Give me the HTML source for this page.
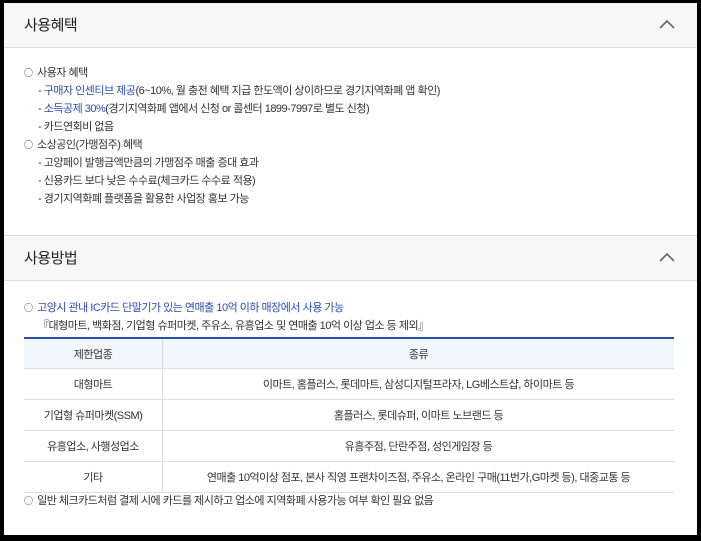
<!DOCTYPE html><html><head><meta charset="utf-8"><style>
body{margin:0;background:#000;width:701px;height:541px;overflow:hidden;font-family:"Liberation Sans","Noto Sans CJK KR",sans-serif;}
.p{position:absolute;left:4px;top:3px;width:693px;height:532px;background:#fff;}
.h{position:absolute;left:0;width:693px;height:44px;background:#f7f7f7;border-bottom:1px solid #ddd;}
.h span{position:absolute;left:20px;top:11px;font-size:15px;color:#222;letter-spacing:-0.5px;}
.h svg{position:absolute;left:655px;top:16px;}
.t{position:absolute;font-size:11px;color:#333;white-space:nowrap;line-height:14px;letter-spacing:-0.5px;}
.c{font-family:"Noto Sans CJK KR",sans-serif;font-size:9px;margin-right:2px;}
.b{color:#2a4ea8}
table{position:absolute;left:20px;top:334px;width:650px;border-collapse:collapse;font-size:11px;color:#333;letter-spacing:-0.5px;table-layout:fixed;}
th{background:#f1f6fb;font-weight:normal;height:29px;padding:0;border-top:2px solid #2a4ea8;border-bottom:1px solid #ddd;}
td{height:30px;padding:0;border-bottom:1px solid #ddd;text-align:center;white-space:nowrap;}
td:first-child,th:first-child{border-right:1px solid #ddd;width:138px;}
</style></head><body><div class="p">
<div class="h" style="top:0"><span>사용혜택</span><svg width="16" height="10"><path d="M1 9L8 2L15 9" fill="none" stroke="#666" stroke-width="1.6"/></svg></div>
<div class="t" style="left:20px;top:63px"><span class="c">○</span> 사용자 혜택</div>
<div class="t" style="left:34px;top:81px">- <span class="b">구매자 인센티브 제공</span>(6~10%, 월 충전 혜택 지급 한도액이 상이하므로 경기지역화폐 앱 확인)</div>
<div class="t" style="left:34px;top:99px">- <span class="b">소득공제 30%</span>(경기지역화폐 앱에서 신청 or 콜센터 1899-7997로 별도 신청)</div>
<div class="t" style="left:34px;top:117px">- 카드연회비 없음</div>
<div class="t" style="left:20px;top:135px"><span class="c">○</span> 소상공인(가맹점주) 혜택</div>
<div class="t" style="left:34px;top:153px">- 고양페이 발행금액만큼의 가맹점주 매출 증대 효과</div>
<div class="t" style="left:34px;top:171px">- 신용카드 보다 낮은 수수료(체크카드 수수료 적용)</div>
<div class="t" style="left:34px;top:189px">- 경기지역화폐 플랫폼을 활용한 사업장 홍보 가능</div>
<div class="h" style="top:232px;border-top:1px solid #ddd"><span>사용방법</span><svg width="16" height="10"><path d="M1 9L8 2L15 9" fill="none" stroke="#666" stroke-width="1.6"/></svg></div>
<div class="t" style="left:20px;top:298px"><span class="c">○</span> <span class="b">고양시 관내 IC카드 단말기가 있는 연매출 10억 이하 매장에서 사용 가능</span></div>
<div class="t" style="left:34px;top:316px">『대형마트, 백화점, 기업형 슈퍼마켓, 주유소, 유흥업소 및 연매출 10억 이상 업소 등 제외』</div>
<table><tr><th>제한업종</th><th>종류</th></tr>
<tr><td>대형마트</td><td>이마트, 홈플러스, 롯데마트, 삼성디지털프라자, LG베스트샵, 하이마트 등</td></tr>
<tr><td>기업형 슈퍼마켓(SSM)</td><td>홈플러스, 롯데슈퍼, 이마트 노브랜드 등</td></tr>
<tr><td>유흥업소, 사행성업소</td><td>유흥주점, 단란주점, 성인게임장 등</td></tr>
<tr><td>기타</td><td>연매출 10억이상 점포, 본사 직영 프랜차이즈점, 주유소, 온라인 구매(11번가,G마켓 등), 대중교통 등</td></tr></table>
<div class="t" style="left:20px;top:491px"><span class="c">○</span> 일반 체크카드처럼 결제 시에 카드를 제시하고 업소에 지역화폐 사용가능 여부 확인 필요 없음</div>
</div></body></html>
